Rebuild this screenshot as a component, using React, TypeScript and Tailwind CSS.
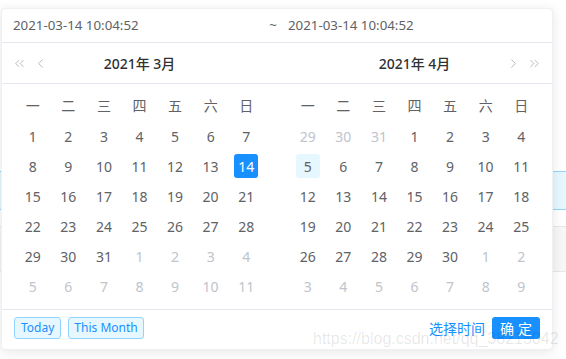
import { ChevronLeft, ChevronRight, ChevronsLeft, ChevronsRight } from "lucide-react";

const weekdays = ["一", "二", "三", "四", "五", "六", "日"];

type Day = { n: number; muted?: boolean; active?: boolean; today?: boolean };

function buildMonth(start: number[], days: number, tail: number, opts: { active?: number; today?: number }) {
  const cells: Day[] = [];
  start.forEach((n) => cells.push({ n, muted: true }));
  for (let i = 1; i <= days; i++) {
    cells.push({ n: i, active: opts.active === i, today: opts.today === i });
  }
  for (let i = 1; i <= tail; i++) cells.push({ n: i, muted: true });
  return cells;
}

const march = buildMonth([], 31, 11, { active: 14 });
const april = buildMonth([29, 30, 31], 30, 9, { today: 5 });

function MonthGrid({ cells }: { cells: Day[] }) {
  return (
    <div className="px-[13px] pt-[5px] pb-[8px]">
      <div className="grid grid-cols-7 h-[32px] items-center text-center text-[14px] text-[#606266]">
        {weekdays.map((w) => (
          <span key={w}>{w}</span>
        ))}
      </div>
      <div className="grid grid-cols-7 text-[14px]">
        {cells.map((c, i) => (
          <div key={i} className="h-[30px] flex items-center justify-center">
            <span
              className={
                c.active
                  ? "w-[24px] h-[24px] flex items-center justify-center rounded-[3px] bg-[#1890ff] text-white"
                  : c.today
                  ? "w-[24px] h-[24px] flex items-center justify-center rounded-[3px] bg-[#e6f7ff] text-[#606266]"
                  : c.muted
                  ? "text-[#c0c4cc]"
                  : "text-[#606266]"
              }
            >
              {c.n}
            </span>
          </div>
        ))}
      </div>
    </div>
  );
}

export default function App() {
  return (
    <div
      className="relative w-[566px] h-[359px] bg-white overflow-hidden"
      style={{ fontFamily: '"Noto Sans", "Noto Sans CJK SC", sans-serif' }}
    >
      {/* page content behind the popup */}
      <div className="pt-[171px]">
        <div className="h-[39px] bg-[#e6f7ff] border-y border-[#91d5ff]" />
        <div className="mt-[16px] h-[46px] bg-[#f7f7f7] border-y border-[#e8e8e8]" />
      </div>

      {/* range picker popup */}
      <div className="absolute left-[1px] top-[8px] w-[552px] h-[342px] bg-white rounded-[4px] border border-[#eef0f3] shadow-[0_2px_12px_rgba(0,0,0,0.1)] flex flex-col">
        <div className="h-[34px] flex items-center border-b border-[#e4e7ed] text-[13.3px] text-[#606266]">
          <span className="w-[261px] pl-[11px]">2021-03-14 10:04:52</span>
          <span className="w-[20px] text-center">~</span>
          <span className="pl-[5px]">2021-03-14 10:04:52</span>
        </div>

        <div className="flex h-[41px] border-b border-[#e4e7ed]">
          <div className="relative w-[276px] flex items-center justify-center">
            <div className="absolute left-[10px] top-[13px] flex items-center gap-[6px] text-[#a8abb2]">
              <ChevronsLeft size={15} strokeWidth={1.3} />
              <ChevronLeft size={15} strokeWidth={1.3} />
            </div>
            <span className="text-[14px] font-medium text-[#303133]">2021年 3月</span>
          </div>
          <div className="relative w-[276px] flex items-center justify-center">
            <span className="text-[14px] font-medium text-[#303133]">2021年 4月</span>
            <div className="absolute right-[10px] top-[13px] flex items-center gap-[6px] text-[#a8abb2]">
              <ChevronRight size={15} strokeWidth={1.3} />
              <ChevronsRight size={15} strokeWidth={1.3} />
            </div>
          </div>
        </div>

        <div className="flex border-b border-[#e4e7ed]">
          <div className="w-[276px]">
            <MonthGrid cells={march} />
          </div>
          <div className="w-[276px]">
            <MonthGrid cells={april} />
          </div>
        </div>

        <div className="flex items-center justify-between px-[12px] pt-[7px]">
          <div className="flex gap-[7px] text-[12px]">
            <button className="h-[22px] px-[6px] rounded-[3px] border border-[#91d5ff] bg-[#e6f7ff] text-[#1890ff]">
              Today
            </button>
            <button className="h-[22px] px-[5px] rounded-[3px] border border-[#91d5ff] bg-[#e6f7ff] text-[#1890ff]">
              This Month
            </button>
          </div>
          <div className="flex items-center gap-[7px]">
            <span className="text-[14px] text-[#1890ff]">选择时间</span>
            <button className="h-[22px] w-[48px] rounded-[3px] bg-[#1890ff] text-white text-[14px] tracking-[4px] pl-[4px]">
              确定
            </button>
          </div>
        </div>
      </div>

      {/* watermark */}
      <div
        className="absolute left-[313px] top-[330px] text-[16px] leading-[18px] text-[rgba(0,0,0,0.1)] whitespace-nowrap"
        style={{ fontFamily: '"Liberation Sans", Arial, sans-serif' }}
      >
        https://blog.csdn.net/qq_38215042
      </div>
    </div>
  );
}
